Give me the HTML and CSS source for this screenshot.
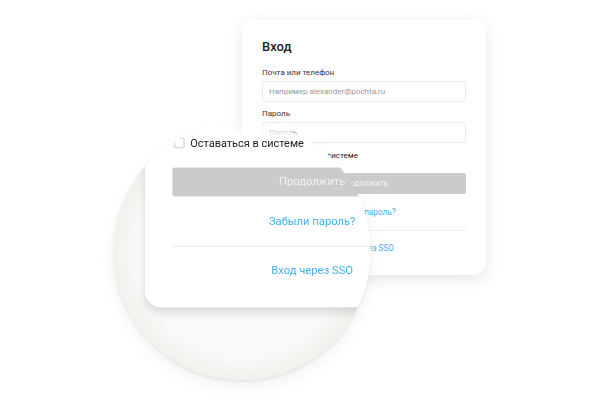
FILE: index.html
```html
<!DOCTYPE html>
<html lang="ru">
<head>
    <meta charset="UTF-8">
    <meta name="viewport" content="width=device-width, initial-scale=1.0">
    <title>Вход</title>
    <link rel="stylesheet" href="styles.css">
</head>
<body>
    <div class="stage">
        <form class="card">
            <h1 class="card-title">Вход</h1>

            <label class="field-label" for="login">Почта или телефон</label>
            <input class="field" type="text" id="login" placeholder="Например alexander@pochta.ru">

            <label class="field-label" for="password">Пароль</label>
            <input class="field" type="password" id="password" placeholder="Пароль">

            <label class="remember">
                <span class="checkbox"></span>
                Оставаться в системе
            </label>

            <button type="button" class="btn-continue">Продолжить</button>
            <a class="link" href="#">Забыли пароль?</a>
            <div class="divider"></div>
            <a class="link" href="#">Вход через SSO</a>
        </form>

        <!-- magnifier: the same card, scaled up -->
        <div class="lens-frame" aria-hidden="true">
            <div class="lens">
                <div class="card card-zoomed">
                    <div class="card-title">Вход</div>
                    <div class="field-label">Почта или телефон</div>
                    <div class="field">Например alexander@pochta.ru</div>
                    <div class="field-label">Пароль</div>
                    <div class="field">Пароль</div>
                    <div class="remember">
                        <span class="checkbox"></span>
                        Оставаться в системе
                    </div>
                    <div class="btn-continue">Продолжить</div>
                    <div class="link">Забыли пароль?</div>
                    <div class="divider"></div>
                    <div class="link">Вход через SSO</div>
                </div>
            </div>
        </div>
    </div>
</body>
</html>
```

FILE: styles.css
```css
/* Page */
body {
    margin: 0;
    background: #fff;
    font-family: Roboto, "Noto Sans", Arial, sans-serif;
    color: #222;
}

.stage {
    position: relative;
    width: 600px;
    height: 400px;
    overflow: hidden;
    box-sizing: border-box;
    padding: 20px 0 0 242px;
}

/* Login card */
.card {
    width: 244px;
    box-sizing: border-box;
    padding: 19px 20px 20px;
    margin: 0;
    display: flex;
    flex-direction: column;
    background: #fff;
    border-radius: 12px;
    box-shadow: 0 4px 16px rgba(0, 0, 0, 0.1);
}

.card-title {
    margin: 0 0 12px;
    font-size: 13px;
    line-height: 16px;
    font-weight: 500;
    color: #1f1f1f;
}

.field-label {
    display: block;
    font-size: 8px;
    line-height: 12px;
    color: #333;
    margin-bottom: 2px;
}

.field {
    display: block;
    width: 100%;
    height: 21px;
    box-sizing: border-box;
    margin: 0 0 6px;
    padding: 0 6px;
    border: 1px solid #ececec;
    border-radius: 3px;
    font-family: inherit;
    font-size: 8px;
    line-height: 19px;
    color: #999;
    background: #fff;
    outline: none;
}

.field::placeholder {
    color: #999;
}

.remember {
    display: flex;
    align-items: center;
    height: 12px;
    font-size: 8px;
    color: #222;
}

.checkbox {
    width: 8px;
    height: 8px;
    box-sizing: border-box;
    border: 1px solid #d9d9d9;
    border-radius: 2px;
    margin: 0 4px 0 1px;
}

.btn-continue {
    margin-top: 12px;
    height: 21px;
    width: 100%;
    border: none;
    border-radius: 2px;
    background: #cbcbcb;
    color: #f1f1f1;
    font-family: inherit;
    font-size: 8.2px;
    line-height: 21px;
    text-align: center;
    padding: 0;
}

.link {
    display: block;
    margin-top: 11px;
    font-size: 8.2px;
    line-height: 14px;
    text-align: center;
    color: #45b1e6;
    text-decoration: none;
}

.divider {
    margin-top: 11px;
    height: 1px;
    background: #eeeeee;
}

.divider + .link {
    margin-top: 10px;
}

/* Magnifier */
.lens-frame {
    position: absolute;
    left: 113px;
    top: 122px;
    width: 258px;
    height: 258px;
    border-radius: 50%;
    box-shadow: 0 2px 3px rgba(0, 0, 0, 0.07), 0 8px 16px rgba(0, 0, 0, 0.05);
}

.lens {
    position: relative;
    width: 100%;
    height: 100%;
    border-radius: 50%;
    overflow: hidden;
    background: radial-gradient(circle 129px at 50% 50%, #f9f9f9 82%, #f1f0ec 100%);
    -webkit-mask-image: linear-gradient(to bottom, transparent 3px, #000 15px);
    mask-image: linear-gradient(to bottom, transparent 3px, #000 15px);
}

.card-zoomed {
    position: absolute;
    left: 32px;
    top: -164px;
    transform: scale(1.37);
    transform-origin: 0 0;
    box-shadow: 0 4px 7px rgba(0, 0, 0, 0.13);
}
```
